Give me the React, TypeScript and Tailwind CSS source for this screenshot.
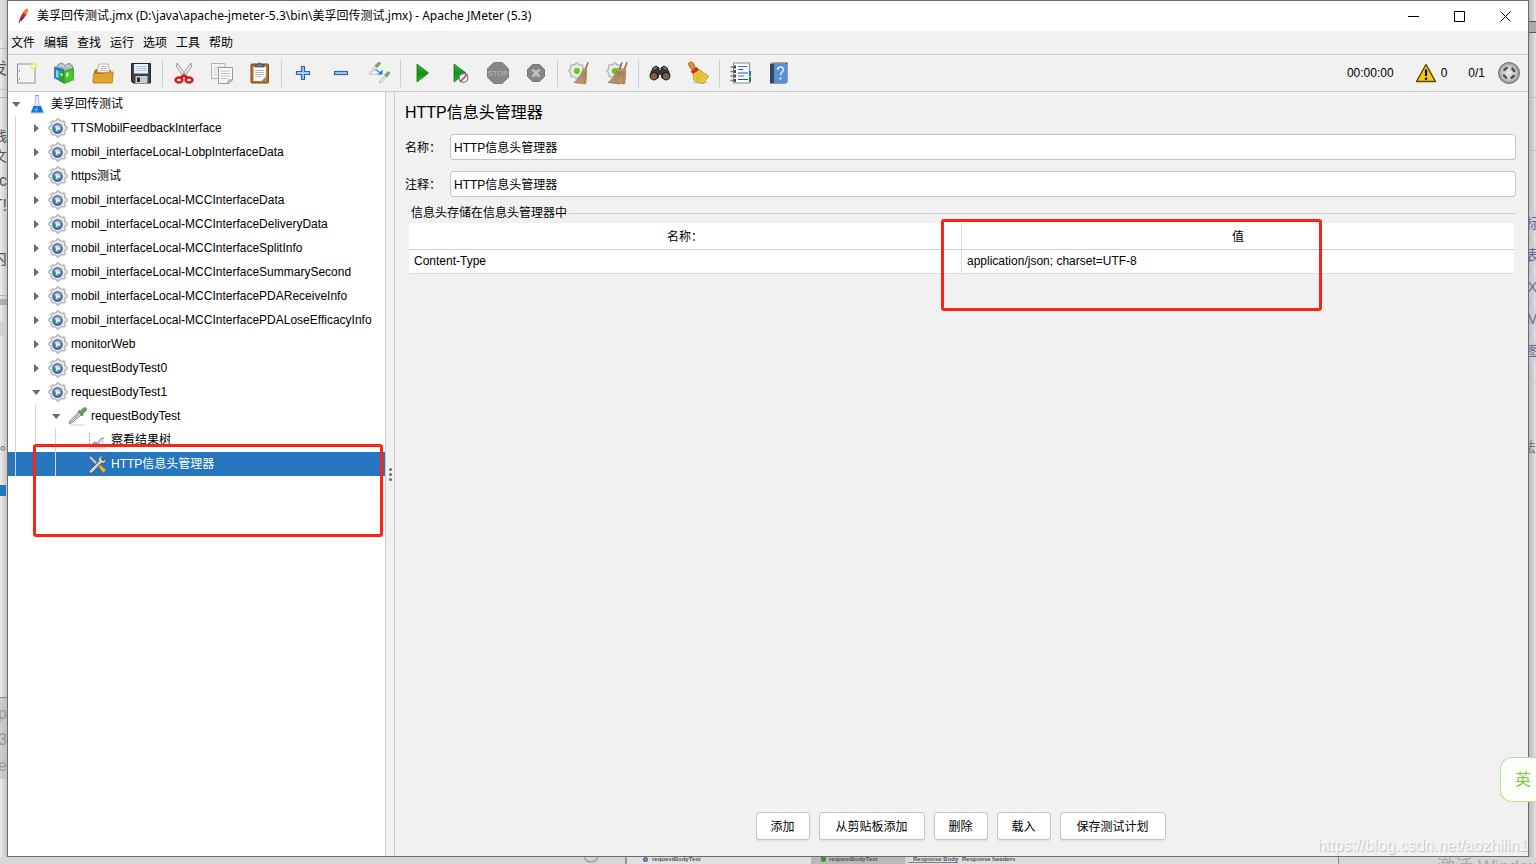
import React from 'react';

type IconName =
  | 'new' | 'templates' | 'open' | 'save' | 'cut' | 'copy' | 'paste' | 'plus' | 'minus' | 'toggle'
  | 'start' | 'startNoPause' | 'stop' | 'shutdown' | 'clear' | 'clearAll' | 'search' | 'searchReset'
  | 'functions' | 'help';

const TEETH = [
  [10, 2.4], [15.4, 4.6], [17.6, 10], [15.4, 15.4], [10, 17.6], [4.6, 15.4], [2.4, 10], [4.6, 4.6],
];

function Gear() {
  return (
    <g>
      <circle cx="10" cy="10" r="7.4" fill="#e6e6e6" stroke="#999" strokeWidth="1.4" />
      {TEETH.map(([x, y]) => (
        <circle key={`${x}-${y}`} cx={x} cy={y} r="1.8" fill="#dedede" stroke="#999" strokeWidth=".8" />
      ))}
      <circle cx="10" cy="10" r="7.2" fill="#e9e9e9" />
    </g>
  );
}

function Broom({ x = 0 }: { x?: number }) {
  return (
    <g transform={`translate(${x} 0)`}>
      <path d="M18.500 0l1.200.4-2.700 8-1.800-.6z" fill="#9c6b3c" />
      <path d="M14.500 6.500l3 1c.3 4 .2 9-.8 14.500L5 20.500c4-3.500 7.500-8 9.500-14z" fill="#c3a078" stroke="#94724b" strokeWidth=".6" />
      <path d="M14.500 9l-7 12M15.300 9l-4.800 12.500M16 9l-2.500 12.500M16.700 9l-1.200 12.500" stroke="#8d6a43" strokeWidth=".6" fill="none" />
    </g>
  );
}

function ToolIcon({ name }: { name: IconName }) {
  switch (name) {
    case 'new':
      return (
        <>
          <rect x="1.500" y="2" width="17.500" height="19" fill="#f4f4f4" stroke="#8f8f8f" />
          <path d="M3.500 8v2M3.500 16v2" stroke="#999" />
          <circle cx="18" cy="4" r="3.500" fill="#f7e96c" opacity=".8" />
          <circle cx="18" cy="4" r="1.400" fill="#fffde0" />
        </>
      );
    case 'templates':
      return (
        <>
          <path d="M3 4c3-4 6-4 8 0 3-4 6-3 8 1l-1 6H4z" fill="#aab6b8" stroke="#6f8387" strokeWidth=".8" />
          <path d="M5 5c1-2.500 4-2.500 5 0M12 5c2-2 4-1 5 1" stroke="#e8eeee" fill="none" />
          <path d="M.5 5l9 2.500v13l-9-4.500z" fill="#1c86c8" stroke="#0e5e94" strokeWidth=".6" />
          <path d="M2 8l2.500.8v7.500L2 15z" fill="#8fd0ee" />
          <path d="M5 8.500l5 1.500v11.500l-5-2.500z" fill="#21a53a" />
          <path d="M6.500 11l2 .6v3l-2-.7z" fill="#b6efb2" />
          <path d="M10 9.500l9.500-3v11.500l-9.500 3.500z" fill="#42c820" stroke="#1d8c17" strokeWidth=".7" />
          <path d="M12 11l2.500-.8v4L12 15z" fill="#e6ffd8" />
          <path d="M19.500 17l2.500 1-9 3z" fill="#b5b5b5" />
        </>
      );
    case 'open':
      return (
        <>
          <path d="M2 9l2-2h5l1 1h9v12H2z" fill="#b87b13" />
          <path d="M5 10l2-8h9l2 9z" fill="#fafafa" stroke="#999" strokeWidth=".7" />
          <path d="M8.500 4.500h6M8 6.500h7M7.500 8.500h8" stroke="#aaa" strokeWidth=".8" />
          <path d="M.8 20l1-8.500H13L14.500 10h6.700l-1 11H1.500z" fill="#e0a531" stroke="#b1780f" strokeWidth=".8" />
        </>
      );
    case 'save':
      return (
        <>
          <path d="M1.500 1.500h19v19.500H3L1.500 19.500z" fill="#3c4149" stroke="#23272d" />
          <rect x="4" y="2" width="14" height="9.500" fill="#e9f1fa" />
          <path d="M5.500 4.500h11M5.500 6.500h11M5.500 8.500h11" stroke="#9fbfdd" strokeWidth=".9" />
          <rect x="5.500" y="14" width="12" height="7" fill="#c8cbd0" />
          <rect x="7" y="15.500" width="3" height="4.500" fill="#282c32" />
        </>
      );
    case 'cut':
      return (
        <>
          <path d="M4 1l9.500 13-2 1.500L3.500 5zM18 1L8.500 14l2 1.500L18.500 5z" fill="#e9e9e9" stroke="#888" strokeWidth=".8" />
          <ellipse cx="6" cy="18" rx="3.400" ry="2.500" fill="#fff" stroke="#d51c1c" strokeWidth="2.600" />
          <ellipse cx="16" cy="18" rx="3.400" ry="2.500" fill="#fff" stroke="#d51c1c" strokeWidth="2.600" />
          <path d="M7.500 15.500l3.500-2 3.500 2" stroke="#d51c1c" strokeWidth="2.400" fill="none" />
        </>
      );
    case 'copy':
      return (
        <>
          <path d="M.5 1.500h13.500v15H.5z" fill="#f4f4f4" stroke="#b0b0b0" />
          <path d="M3 5h8M3 7.500h3M3 10h3M3 12.500h3" stroke="#ccc" />
          <path d="M7.500 5.500h14V18l-4 3.500h-10z" fill="#fafafa" stroke="#9a9a9a" />
          <path d="M10 9h9M10 11.500h9M10 14h9M10 16.500h6" stroke="#c0c0c0" />
          <path d="M16.500 21.500l1-4 4 .5z" fill="#ccc" stroke="#888" strokeWidth=".6" />
        </>
      );
    case 'paste':
      return (
        <>
          <rect x="2" y="2" width="17.500" height="19" rx="1" fill="#b77425" stroke="#784711" />
          <rect x="4.500" y="4.500" width="12.500" height="14.500" fill="#f9f9f9" />
          <path d="M6.500 8.500h8.500M6.500 10.500h8.500M6.500 12.500h8.500M6.500 14.500h5" stroke="#b5b5b5" />
          <path d="M12.500 19l4.500-4.500V19z" fill="#888" />
          <path d="M6 5V3h2.500c0-2.700 4-2.700 4 0H15v2z" fill="#75797d" stroke="#3f4245" strokeWidth=".7" />
        </>
      );
    case 'plus':
      return <path d="M9.500 4.500h3v5h5v3h-5v5h-3v-5h-5v-3h5z" fill="#a9cdf1" stroke="#2a66ac" strokeWidth="1.200" />;
    case 'minus':
      return <rect x="4.500" y="9.500" width="13" height="3" fill="#a9cdf1" stroke="#2a66ac" strokeWidth="1.200" />;
    case 'toggle':
      return (
        <>
          <path d="M1.500 10.500l6-6.500L9 5.500 3 11.500l-1.700.4zM11.500 20l5-6 1.500 1.500-5 5-1.500.5z" fill="#eee" stroke="#b0b0b0" strokeWidth=".8" />
          <path d="M7 3.500C9 1.500 10 0 11.500.3s1 2-.2 3L9 5.500zM16.500 13c2-2 3-3.500 4.500-3.200s1 2-.2 3L18.500 15z" fill="#6fae5e" stroke="#4f8c41" strokeWidth=".5" />
          <path d="M1 12.500h10" stroke="#ccc" />
          <path d="M7.500 7.500l4.500 3.200" stroke="#3c86dc" strokeWidth="1.300" />
          <path d="M14.500 7.500v5h-5z" fill="#287bd5" />
        </>
      );
    case 'start':
      return <path d="M6 2l11.500 9L6 20z" fill="url(#runGreen)" stroke="#10780f" strokeWidth=".8" />;
    case 'startNoPause':
      return (
        <>
          <path d="M5 2l12 9-12 9z" fill="url(#runGreen)" stroke="#10780f" strokeWidth=".8" />
          <circle cx="14.500" cy="16" r="4.300" fill="#e7effa" stroke="#6486bf" strokeWidth="1.300" />
          <path d="M11 20l7.500-8" stroke="#d33" strokeWidth="1.400" />
        </>
      );
    case 'stop':
      return (
        <>
          <path d="M6.800.5h8.400l6.300 6.300v8.400l-6.300 6.300H6.800L.5 15.200V6.800z" fill="#888" stroke="#7d7d7d" />
          <text x="11" y="14" textAnchor="middle" fontSize="7.500" fontFamily="Liberation Sans, sans-serif" fill="#bbb">STOP</text>
        </>
      );
    case 'shutdown':
      return (
        <>
          <path d="M7.500 2.500h7l5 5v7l-5 5h-7l-5-5v-7z" fill="#858585" stroke="#777" />
          <path d="M7.500 7.500l7 7M14.500 7.500l-7 7" stroke="#c2c2c2" strokeWidth="2.500" />
        </>
      );
    case 'clear':
    case 'clearAll':
      return (
        <>
          <g transform="translate(0 0) scale(.88)">
            <Gear />
          </g>
          <circle cx="8.800" cy="9" r="3" fill="#65c61c" />
          {name === 'clearAll' && <Broom x={-3} />}
          <Broom x={name === 'clearAll' ? 2 : 1} />
        </>
      );
    case 'search':
      return (
        <>
          <path d="M4 6l3-2 3 2v3h2V6l3-2 3 2 3 7-4 3h-4l-1-4h-2l-1 4H5l-4-3z" fill="#393939" stroke="#1c1c1c" />
          <path d="M4.500 7l3-1.500M14.500 5.500l3 1.500" stroke="#aaa" />
          <circle cx="5" cy="14" r="4.400" fill="#222" />
          <circle cx="17" cy="14" r="4.400" fill="#222" />
          <circle cx="5" cy="14.300" r="2.800" fill="#9b5226" stroke="#777" strokeWidth=".7" />
          <circle cx="17" cy="14.300" r="2.800" fill="#9b5226" stroke="#777" strokeWidth=".7" />
        </>
      );
    case 'searchReset':
      return (
        <>
          <ellipse cx="13" cy="20.500" rx="8" ry="1.300" fill="#ccc" />
          <path d="M1.500 1.500c1-2 4-2 5 0l2 4.500-3.500 2-3-4.500z" fill="#d8913d" stroke="#8a5116" strokeWidth=".8" />
          <path d="M6 11l6-3.500c3 2 6 4.500 9.500 6.500l-5 7.500c-3-.5-6-1.500-9.500-3.500z" fill="#f0d341" stroke="#ad8c13" strokeWidth=".8" />
          <path d="M8 12.500l2.500 6M9.500 11.500l4 8M11 10.500l5 8M12.500 9.500l6 7" stroke="#b99717" strokeWidth=".7" />
          <path d="M3.500 9.500L10 5l2 3-6 4z" fill="#d42a1d" />
        </>
      );
    case 'functions':
      return (
        <>
          <rect x="3.500" y="1" width="16" height="20" fill="#fff" stroke="#888" />
          <rect x="19" y="9" width="2" height="5" fill="#1e70e5" />
          <rect x="19" y="15" width="2" height="5" fill="#178e1d" />
          <path d="M8 4.500h9M8 14h6" stroke="#2d76e8" />
          <path d="M8 7.500h5M8 11h10M8 17.500h10" stroke="#154fc6" strokeWidth="1.200" />
          <path d="M.5 5h4M.5 9.500h4M.5 14h4M.5 18.500h4" stroke="#777" strokeWidth="1.300" />
          <path d="M5 3.500v3M5 8v3M5 12.500v3M5 17v3" stroke="#111" strokeWidth="1.500" />
        </>
      );
    case 'help':
      return (
        <>
          <path d="M2 2l2-1.500h15.500v19l-1.500 2H2z" fill="#33445c" />
          <rect x="6" y="2" width="13" height="19" fill="#5590d8" />
          <path d="M3 1.200h15" stroke="#c5ccd5" strokeWidth=".8" />
          <path d="M9.500 8c0-4 6-4 6-.5 0 2.500-3 2.500-3 5.500" fill="none" stroke="#f0f5fc" strokeWidth="1.500" />
          <circle cx="12.500" cy="16.500" r="1.100" fill="#fff" />
        </>
      );
  }
}

const toolGroups: { icon: IconName; label: string }[][] = [
  [
    { icon: 'new', label: '新建' },
    { icon: 'templates', label: '模板' },
    { icon: 'open', label: '打开' },
    { icon: 'save', label: '保存' },
  ],
  [
    { icon: 'cut', label: '剪切' },
    { icon: 'copy', label: '复制' },
    { icon: 'paste', label: '粘贴' },
  ],
  [
    { icon: 'plus', label: '展开' },
    { icon: 'minus', label: '折叠' },
    { icon: 'toggle', label: '切换' },
  ],
  [
    { icon: 'start', label: '启动' },
    { icon: 'startNoPause', label: '不停顿开始' },
    { icon: 'stop', label: '停止' },
    { icon: 'shutdown', label: '关闭' },
  ],
  [
    { icon: 'clear', label: '清除' },
    { icon: 'clearAll', label: '清除全部' },
  ],
  [
    { icon: 'search', label: '搜索' },
    { icon: 'searchReset', label: '重置搜索' },
  ],
  [
    { icon: 'functions', label: '函数助手' },
    { icon: 'help', label: '帮助' },
  ],
];

type NodeIcon = 'plan' | 'group' | 'sampler' | 'listener' | 'config';

interface TreeRow {
  label: string;
  depth: number;
  icon: NodeIcon;
  state?: 'open' | 'closed';
  selected?: boolean;
}

const treeRows: TreeRow[] = [
  { label: '美孚回传测试', depth: 0, icon: 'plan', state: 'open' },
  { label: 'TTSMobilFeedbackInterface', depth: 1, icon: 'group', state: 'closed' },
  { label: 'mobil_interfaceLocal-LobpInterfaceData', depth: 1, icon: 'group', state: 'closed' },
  { label: 'https测试', depth: 1, icon: 'group', state: 'closed' },
  { label: 'mobil_interfaceLocal-MCCInterfaceData', depth: 1, icon: 'group', state: 'closed' },
  { label: 'mobil_interfaceLocal-MCCInterfaceDeliveryData', depth: 1, icon: 'group', state: 'closed' },
  { label: 'mobil_interfaceLocal-MCCInterfaceSplitInfo', depth: 1, icon: 'group', state: 'closed' },
  { label: 'mobil_interfaceLocal-MCCInterfaceSummarySecond', depth: 1, icon: 'group', state: 'closed' },
  { label: 'mobil_interfaceLocal-MCCInterfacePDAReceiveInfo', depth: 1, icon: 'group', state: 'closed' },
  { label: 'mobil_interfaceLocal-MCCInterfacePDALoseEfficacyInfo', depth: 1, icon: 'group', state: 'closed' },
  { label: 'monitorWeb', depth: 1, icon: 'group', state: 'closed' },
  { label: 'requestBodyTest0', depth: 1, icon: 'group', state: 'closed' },
  { label: 'requestBodyTest1', depth: 1, icon: 'group', state: 'open' },
  { label: 'requestBodyTest', depth: 2, icon: 'sampler', state: 'open' },
  { label: '察看结果树', depth: 3, icon: 'listener' },
  { label: 'HTTP信息头管理器', depth: 3, icon: 'config', selected: true },
];

function TreeIcon({ name }: { name: NodeIcon }) {
  return (
    <svg viewBox="0 0 20 20" className="mr-[3px] size-5 shrink-0">
      {name === 'plan' && (
        <>
          <path d="M7.500 1.500h3l.5 8 4 9H3l4-9z" fill="#dce9f5" stroke="#a5bdd2" strokeWidth=".8" />
          <path d="M5.500 12h7.500l2.500 6.500H3z" fill="#1673dc" />
          <path d="M5 15c2 1 3-1 5-2l-1 5" fill="#64aaf0" />
          <path d="M7 1.500h4M3 18.800h12.500" stroke="#8ca6bd" />
        </>
      )}
      {name === 'group' && (
        <>
          <Gear />
          <circle cx="9.500" cy="10.500" r="4.600" fill="#5f86be" stroke="#2c4f86" strokeWidth="1.200" />
          <path d="M5.500 9c1.500-3.500 6.500-3.500 8 0-2 1.500-6 1.500-8 0z" fill="#9fb9dd" />
          <path d="M8 7.700l5 2.800-5 2.800z" fill="#e4eefb" />
        </>
      )}
      {name === 'sampler' && (
        <>
          <path d="M1.500 19h15" stroke="#ccc" />
          <path d="M1 17.500l1.500-3.500 8.500-8 2.500 2.500-9 8z" fill="#e2e2e2" stroke="#6a6a6a" strokeWidth=".8" />
          <path d="M3 16l8-8" stroke="#8a8a8a" />
          <path d="M10 5.500l1-1 1.500.5 3-3c1.500-1.500 4 .3 3 2.300l-3.500 3.200v2l-1 .5z" fill="#5ea351" stroke="#3d7a35" strokeWidth=".6" />
        </>
      )}
      {name === 'listener' && (
        <>
          <path d="M1.500 3v15h16" fill="none" stroke="#a8a8a8" strokeDasharray="2 1" />
          <path d="M4 16.500c2-5 4-4 6-3 2 .5 2-6 6-5.500v8.500z" fill="#dfe7f6" />
          <path d="M4 15.500c2-4 4-3.500 6-1" stroke="#c7437b" fill="none" strokeWidth="1.300" />
          <path d="M8 16c3-1 2-8 8-8" stroke="#85aee2" fill="none" strokeWidth="1.300" />
        </>
      )}
      {name === 'config' && (
        <>
          <path d="M1 2l2 .5L12 11.500 10.500 13 1.500 4z" fill="#e2e2e2" stroke="#555" strokeWidth=".6" />
          <path d="M10.500 13l2-2 5.500 5-2.500 3z" fill="#f0b62e" stroke="#98700e" strokeWidth=".6" />
          <path d="M1 17l9.500-9.500c-1-3 1.500-6.500 5-5.500l-2 2 .5 2 2 .5 2-2c.5 3.500-2 5.500-5 5L4 19c-2 .5-3.500-.5-3-2z" fill="#cfcfcf" stroke="#474747" strokeWidth=".8" />
        </>
      )}
    </svg>
  );
}

function TreeItem({ row }: { row: TreeRow }) {
  return (
    <li
      role="treeitem"
      aria-selected={!!row.selected}
      className={`flex h-6 items-center whitespace-nowrap ${row.selected ? 'bg-[#2675bf] text-white' : 'text-black'}`}
    >
      {Array.from({ length: row.depth }, (_, i) => (
        <span key={i} className="ml-[7px] h-6 w-[13px] shrink-0 border-l border-[#d5d5d5]" />
      ))}
      <span className="flex w-5 shrink-0 pl-[3px]">
        {row.state && (
          <svg viewBox="0 0 10 10" className="size-[10px]">
            <path d={row.state === 'open' ? 'M1 3h8.500L5.200 8z' : 'M3 1v8.500l5-4.300z'} fill="#6b6b6b" />
          </svg>
        )}
      </span>
      <TreeIcon name={row.icon} />
      {row.label}
    </li>
  );
}

function TitleBar() {
  return (
    <header className="flex h-[30px] shrink-0 items-center bg-white">
      <svg viewBox="0 0 16 16" className="ml-[7px] size-4">
        <path d="M12.500.5c1 2-1 8-6.500 12.500L4.500 12C6 7 9 2 12.500.5z" fill="#d4202f" />
        <path d="M12.500.5c.8 1.500-.2 4-1.500 6L8.500 5c1-2 2.500-3.500 4-4.500z" fill="#f0882b" />
        <path d="M6.500 8.500l2.500 1.500-3 3L4.500 12z" fill="#8c2369" />
        <path d="M5 12l-1 3" stroke="#7b285f" />
      </svg>
      <h1 className="ml-[6px] font-['Noto_Sans','Noto_Sans_CJK_SC',sans-serif] text-[12px]">
        美孚回传测试.jmx (D:\java\apache-jmeter-5.3\bin\美孚回传测试.jmx) - Apache JMeter (5.3)
      </h1>
      <div className="ml-auto flex">
        {[
          { label: '最小化', d: 'M0 5.500h11' },
          { label: '最大化', d: 'M.5.5h10v10H.5z' },
          { label: '关闭', d: 'M.5.5l10 10M10.500.5l-10 10' },
        ].map((b) => (
          <button key={b.label} aria-label={b.label} className="flex h-[30px] w-[46px] items-center justify-center">
            <svg viewBox="0 0 11 11" className="size-[11px]">
              <path d={b.d} stroke="#000" fill="none" />
            </svg>
          </button>
        ))}
      </div>
    </header>
  );
}

function Toolbar() {
  return (
    <div className="flex h-[37px] shrink-0 items-center border-b border-[#cdcdcd]">
      {toolGroups.map((group, g) => (
        <React.Fragment key={g}>
          {g > 0 && <span className="mx-[2px] h-[27px] w-px bg-[#cdcdcd]" />}
          {group.map((tool) => (
            <button key={tool.icon} aria-label={tool.label} className="flex w-[38px] justify-center">
              <svg viewBox="0 0 22 22" className="size-[22px] overflow-visible">
                <ToolIcon name={tool.icon} />
              </svg>
            </button>
          ))}
        </React.Fragment>
      ))}
      <div className="ml-auto flex items-center pr-[7px]">
        <span>00:00:00</span>
        <button aria-label="日志" className="ml-[21px] flex items-center gap-1">
          <svg viewBox="0 0 22 20" className="h-5 w-[22px]">
            <path d="M11 1.500L20.500 18.500H1.500z" fill="#f6c912" stroke="#5b4a08" strokeWidth="1.500" strokeLinejoin="round" />
            <path d="M11 6.500v6.500" stroke="#111" strokeWidth="2.200" />
            <circle cx="11" cy="15.700" r="1.300" fill="#111" />
          </svg>
          0
        </button>
        <span className="ml-[21px]">0/1</span>
        <svg viewBox="0 0 24 24" className="ml-3 size-6">
          <circle cx="12" cy="12" r="10.500" fill="url(#dial)" stroke="#757575" />
          <circle cx="12" cy="12" r="5.500" fill="none" stroke="#4d4d4d" strokeWidth="2.400" strokeDasharray="4.640 4" strokeDashoffset="-2" />
        </svg>
      </div>
    </div>
  );
}

const fields = [
  { id: 'name', label: '名称：' },
  { id: 'comment', label: '注释：' },
];

function HeaderManager() {
  return (
    <main className="relative flex min-w-0 flex-1 flex-col pt-[9px] pb-4">
      <h2 className="ml-[10px] text-[16px] leading-6">HTTP信息头管理器</h2>
      <div className="mt-[9px] mr-3 ml-[10px] flex flex-col gap-[11px]">
        {fields.map((f) => (
          <div key={f.id} className="flex items-center">
            <label htmlFor={f.id} className="w-[45px] shrink-0 pt-[2px]">
              {f.label}
            </label>
            <input
              id={f.id}
              defaultValue="HTTP信息头管理器"
              className="h-[26px] min-w-0 flex-1 rounded-[3px] border border-[#c4c4c4] bg-white px-[3px] pb-[2px]"
            />
          </div>
        ))}
      </div>
      <fieldset className="mx-3 mt-2 min-w-0 border-t border-[#cfcfcf] px-[2px]">
        <legend className="px-[2px] leading-4">信息头存储在信息头管理器中</legend>
        <table className="mt-[2px] w-full table-fixed border-collapse bg-white">
          <thead>
            <tr className="h-[26px] border-b border-[#cfcfcf]">
              <th className="border-r border-[#d9d9d9] p-0 pt-[2px] font-normal">名称：</th>
              <th className="p-0 pt-[2px] font-normal">值</th>
            </tr>
          </thead>
          <tbody>
            <tr className="h-6 border-b border-[#dcdcdc]">
              <td className="border-r border-[#d9d9d9] px-[5px] py-0">Content-Type</td>
              <td className="px-[5px] py-0">application/json; charset=UTF-8</td>
            </tr>
          </tbody>
        </table>
      </fieldset>
      <div className="mt-auto flex justify-center gap-[9px] pr-[2px]">
        {['添加', '从剪贴板添加', '删除', '载入', '保存测试计划'].map((label) => (
          <button
            key={label}
            className={`h-7 rounded-[3px] border border-[#c4c4c4] bg-white pt-[2px] shadow-[0_2px_0_#e5e5e5] ${label.length > 2 ? 'w-[106px]' : 'w-[54px]'}`}
          >
            {label}
          </button>
        ))}
      </div>
      <div className="pointer-events-none absolute top-[127px] left-[546px] h-[92px] w-[381px] rounded-[3px] border-3 border-[#fc2314]" />
    </main>
  );
}

// Slivers of the windows that lie behind the main one
function LeftEdge() {
  return (
    <div className="flex flex-col items-stretch overflow-hidden bg-linear-to-r from-[#ececec] to-[#c4c4c4] text-[16px] leading-5 whitespace-nowrap text-[#555]">
      <div className="h-10 shrink-0 bg-[#d9d9d9]/60" />
      <div className="mt-2 flex h-[42px] shrink-0 items-center justify-end border-y border-[#bbb]">发</div>
      <div className="mt-[7px] flex h-[199px] shrink-0 flex-col items-end gap-[5px] border-y border-[#b0b0b0] pt-7">
        <span className="-mb-[5px] text-[14px]">栈</span>
        <span className="text-[14px]">文</span>
        <span>cc</span>
        <span>T!</span>
        <span className="mt-7">内</span>
      </div>
      <div className="mt-[3px] h-[6px] shrink-0 bg-[#999]/70" />
      <div className="mt-[17px] h-[14px] shrink-0 bg-[#c5d0c5]/70" />
      <div className="mt-[98px] h-5 shrink-0 text-[14px]">。</div>
      <div className="mt-[31px] mr-px h-[11px] shrink-0 bg-[#2675bf]" />
      <div className="mt-[201px] flex h-[82px] shrink-0 flex-col items-end gap-[6px] border-t border-[#888] bg-[#bbb]/60 pt-[6px] text-[#999]">
        <span>tp</span>
        <span>3</span>
        <span>te</span>
      </div>
    </div>
  );
}

function RightEdge() {
  return (
    <div className="flex flex-col overflow-hidden bg-linear-to-r from-[#b9b9b9] to-[#e3e3e3] text-[14px] leading-6 whitespace-nowrap text-[#66698c]">
      <div className="mt-[21px] h-3 shrink-0 border-y border-[#555] bg-[#aaa]" />
      <div className="mt-16 h-[54px] shrink-0 border-y border-[#bbb]" />
      <div className="flex h-[232px] shrink-0 flex-col gap-2 border-b border-[#c5c5c5] pt-[60px]">
        {['标', '表', 'X', 'M', '图'].map((t) => (
          <span key={t} className="flex justify-center bg-[#c9cfd9]/60">
            {t}
          </span>
        ))}
      </div>
      <span className="mt-[52px] flex justify-end text-[#777]">法</span>
    </div>
  );
}

function BottomEdge() {
  return (
    <div className="col-span-3 flex overflow-hidden bg-[#d6d6d6] text-[6px] leading-[4px] font-bold whitespace-nowrap text-[#555]">
      <div className="flex w-[625px] shrink-0 justify-end pr-[26px]">
        <span className="-mt-[10px] size-4 shrink-0 rounded-full border-2 border-[#aaa]" />
      </div>
      <div className="flex w-[186px] shrink-0 gap-1 border-l-2 border-[#999] bg-[#dfe0e1] pl-4">
        <span className="size-[5px] rounded-full border-2 border-[#5475a4]" />
        requestBodyTest
      </div>
      <div className="flex w-[94px] shrink-0 gap-[3px] bg-[#b8b8b8] pl-[10px]">
        <span className="size-[5px] rounded-b-full bg-[#269b2d]" />
        requestBodyTest
      </div>
      <div className="mx-1 flex w-[430px] shrink-0 border-r border-[#888] bg-[#dcdcdc]">
        <span className="h-[6px] w-[49px] border-b border-[#71809b] pl-1">Response Body</span>
        <span className="pl-1">Response headers</span>
      </div>
      <span className="ml-[94px] text-[18px] leading-5 font-normal text-[#aaa]">激活 Windows</span>
    </div>
  );
}

export default function App() {
  return (
    <div className="relative grid h-screen grid-cols-[7px_minmax(0,1fr)_7px] grid-rows-[minmax(0,1fr)_7px] overflow-hidden font-['Liberation_Sans','Noto_Sans_CJK_SC',sans-serif] text-[12px] leading-4 text-black">
      <svg className="absolute size-0" aria-hidden="true">
        <defs>
          <linearGradient id="runGreen" x1="0" y1="0" x2="0" y2="1">
            <stop offset="0" stopColor="#4cae42" />
            <stop offset=".5" stopColor="#159017" />
            <stop offset="1" stopColor="#23bd1e" />
          </linearGradient>
          <radialGradient id="dial">
            <stop offset="0" stopColor="#ededed" />
            <stop offset=".7" stopColor="#c2c2c2" />
            <stop offset="1" stopColor="#8c8c8c" />
          </radialGradient>
        </defs>
      </svg>
      <LeftEdge />
      <div className="flex min-h-0 flex-col border border-[#6c6c6c] bg-[#f1f1f1]">
        <TitleBar />
        <nav className="flex h-6 shrink-0 items-center gap-[9px] border-b border-[#cdcdcd] pl-[3px]">
          {['文件', '编辑', '查找', '运行', '选项', '工具', '帮助'].map((m) => (
            <button key={m}>{m}</button>
          ))}
        </nav>
        <Toolbar />
        <div className="flex min-h-0 flex-1">
          <aside className="relative w-[378px] shrink-0 border-r border-[#cdcdcd] bg-white">
            <ul role="tree">
              {treeRows.map((row) => (
                <TreeItem key={row.label + row.depth} row={row} />
              ))}
            </ul>
            <div className="pointer-events-none absolute top-[352px] left-[25px] h-[93px] w-[350px] rounded-[3px] border-3 border-[#fc2314]" />
          </aside>
          <div className="flex w-[9px] shrink-0 flex-col items-center justify-center gap-[2px] border-r border-[#cdcdcd]">
            <span className="size-[3px] rounded-full bg-[#6b6b6b]" />
            <span className="size-[3px] rounded-full bg-[#6b6b6b]" />
            <span className="size-[3px] rounded-full bg-[#6b6b6b]" />
          </div>
          <HeaderManager />
        </div>
      </div>
      <RightEdge />
      <BottomEdge />
      <div className="absolute right-0 bottom-[62px] flex h-[45px] w-9 items-center rounded-l-xl border border-r-0 border-[#b5e09a] bg-[#fbfff7] pl-[14px] text-[16px] text-[#7fc93f]">
        英
      </div>
      <span className="absolute right-2 bottom-[8px] text-[16px] leading-5 text-[#f8f8f8] [text-shadow:1px_1px_1px_#bbb]">
        https://blog.csdn.net/aozhilin1
      </span>
    </div>
  );
}
